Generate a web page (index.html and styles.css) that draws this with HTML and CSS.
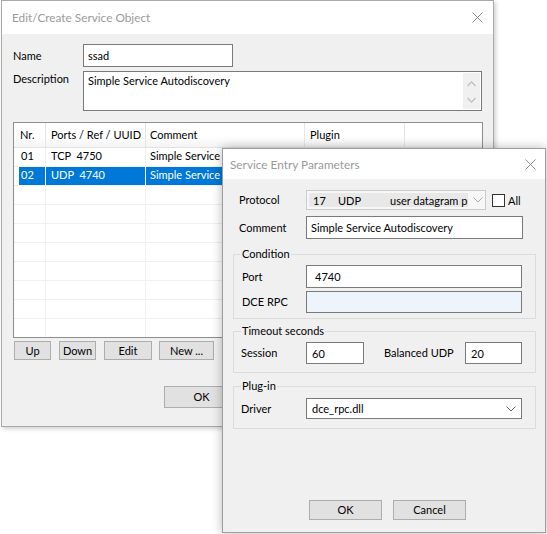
FILE: index.html
```html
<!DOCTYPE html>
<html>
<head>
<meta charset="utf-8">
<title>Service Object</title>
<link rel="stylesheet" href="styles.css">
</head>
<body>
<div class="desk">

  <section class="win win-main">
    <header class="titlebar">
      <span class="title">Edit/Create Service Object</span>
      <svg class="close" width="11" height="11" viewBox="0 0 11 11"><path d="M0.5 0.5 L10.5 10.5 M10.5 0.5 L0.5 10.5" stroke="#8a8a8a" stroke-width="1" fill="none"/></svg>
    </header>
    <div class="main-body">
      <div class="frow">
        <span class="lbl">Name</span>
        <div class="edit name-edit">ssad</div>
      </div>
      <div class="frow frow-top">
        <span class="lbl lbl-top">Description</span>
        <div class="edit desc-edit">
          <span class="desc-text">Simple Service Autodiscovery</span>
          <div class="vscroll">
            <svg width="9" height="6" viewBox="0 0 9 6"><path d="M0.5 5 L4.5 1 L8.5 5" stroke="#c2c2c2" stroke-width="1.3" fill="none"/></svg>
            <svg width="9" height="6" viewBox="0 0 9 6"><path d="M0.5 1 L4.5 5 L8.5 1" stroke="#c2c2c2" stroke-width="1.3" fill="none"/></svg>
          </div>
        </div>
      </div>

      <div class="list">
        <div class="lrow lhead">
          <div class="c c1">Nr.</div>
          <div class="c c2">Ports / Ref / UUID</div>
          <div class="c c3">Comment</div>
          <div class="c c4">Plugin</div>
          <div class="c c5"></div>
        </div>
        <div class="lrow">
          <div class="c c1">01</div>
          <div class="c c2">TCP&nbsp; 4750</div>
          <div class="c c3">Simple Service Autodiscovery</div>
          <div class="c c4"></div>
          <div class="c c5"></div>
        </div>
        <div class="lrow sel">
          <div class="c c1">02</div>
          <div class="c c2">UDP&nbsp; 4740</div>
          <div class="c c3">Simple Service Autodiscovery</div>
          <div class="c c4">dce_rpc.dll</div>
          <div class="c c5"></div>
        </div>
        <div class="lrow"><div class="c c1"></div><div class="c c2"></div><div class="c c3"></div><div class="c c4"></div><div class="c c5"></div></div>
        <div class="lrow"><div class="c c1"></div><div class="c c2"></div><div class="c c3"></div><div class="c c4"></div><div class="c c5"></div></div>
        <div class="lrow"><div class="c c1"></div><div class="c c2"></div><div class="c c3"></div><div class="c c4"></div><div class="c c5"></div></div>
        <div class="lrow"><div class="c c1"></div><div class="c c2"></div><div class="c c3"></div><div class="c c4"></div><div class="c c5"></div></div>
        <div class="lrow"><div class="c c1"></div><div class="c c2"></div><div class="c c3"></div><div class="c c4"></div><div class="c c5"></div></div>
        <div class="lrow"><div class="c c1"></div><div class="c c2"></div><div class="c c3"></div><div class="c c4"></div><div class="c c5"></div></div>
        <div class="lrow"><div class="c c1"></div><div class="c c2"></div><div class="c c3"></div><div class="c c4"></div><div class="c c5"></div></div>
        <div class="lrow"><div class="c c1"></div><div class="c c2"></div><div class="c c3"></div><div class="c c4"></div><div class="c c5"></div></div>
      </div>

      <div class="btnrow">
        <button class="btn b-up">Up</button>
        <button class="btn b-down">Down</button>
        <button class="btn b-edit">Edit</button>
        <button class="btn b-new">New ...</button>
      </div>
      <div class="okrow">
        <button class="btn b-ok1">OK</button>
      </div>
    </div>
  </section>

  <section class="win win-entry">
    <header class="titlebar titlebar-entry">
      <span class="title">Service Entry Parameters</span>
      <svg class="close" width="11" height="11" viewBox="0 0 11 11"><path d="M0.5 0.5 L10.5 10.5 M10.5 0.5 L0.5 10.5" stroke="#8a8a8a" stroke-width="1" fill="none"/></svg>
    </header>
    <div class="entry-body">
      <div class="erow erow-proto">
        <span class="lbl">Protocol</span>
        <div class="combo combo-ro">
          <div class="combo-val"><span class="p-num">17</span><span class="p-name">UDP</span><span class="p-desc">user datagram protocol</span></div>
          <svg class="chev" width="10" height="6" viewBox="0 0 10 6"><path d="M0.5 0.5 L5 5 L9.5 0.5" stroke="#a8a8a8" stroke-width="1" fill="none"/></svg>
        </div>
        <span class="chk"></span>
        <span class="chk-lbl">All</span>
      </div>
      <div class="erow erow-comment">
        <span class="lbl">Comment</span>
        <div class="edit e-comment">Simple Service Autodiscovery</div>
      </div>

      <fieldset class="group g-cond">
        <legend>Condition</legend>
        <div class="grow">
          <span class="lbl">Port</span>
          <div class="edit e-port">4740</div>
        </div>
        <div class="grow grow-2">
          <span class="lbl">DCE RPC</span>
          <div class="edit e-dce"></div>
        </div>
      </fieldset>

      <fieldset class="group g-time">
        <legend>Timeout seconds</legend>
        <div class="grow grow-time">
          <span class="lbl lbl-sess">Session</span>
          <div class="edit e-num">60</div>
          <span class="lbl lbl-bal">Balanced UDP</span>
          <div class="edit e-num e-bal">20</div>
        </div>
      </fieldset>

      <fieldset class="group g-plug">
        <legend>Plug-in</legend>
        <div class="grow grow-plug">
          <span class="lbl lbl-sess">Driver</span>
          <div class="combo combo-drv">
            <span class="drv-val">dce_rpc.dll</span>
            <svg class="chev" width="10" height="6" viewBox="0 0 10 6"><path d="M0.5 0.5 L5 5 L9.5 0.5" stroke="#606060" stroke-width="1" fill="none"/></svg>
          </div>
        </div>
      </fieldset>

      <div class="entry-btns">
        <button class="btn b-ok2">OK</button>
        <button class="btn b-cancel">Cancel</button>
      </div>
    </div>
  </section>

</div>
</body>
</html>
```

FILE: styles.css
```css
* { box-sizing: border-box; }

html, body {
  margin: 0;
  padding: 0;
  background: #ffffff;
}

body {
  font-family: Lato, "Liberation Sans", Arial, sans-serif;
  font-size: 11px;
  color: #000;
}

.desk {
  position: relative;
  width: 547px;
  height: 534px;
  overflow: hidden;
}

.win {
  position: absolute;
  background: #f0f0f0;
  display: flex;
  flex-direction: column;
}

.win-main {
  left: 1px;
  top: 0;
  width: 493px;
  height: 427px;
  border: 1px solid #a9a9a9;
  box-shadow: 2px 2px 4px rgba(0, 0, 0, 0.18);
}

.win-entry {
  left: 222px;
  top: 148px;
  width: 324px;
  height: 385px;
  border: 1px solid #9d9d9d;
  box-shadow: 0 0 10px rgba(0, 0, 0, 0.28);
}

.titlebar {
  height: 33px;
  flex: none;
  background: #fff;
  display: flex;
  align-items: center;
  justify-content: space-between;
  padding: 0 10px 0 10px;
}

.titlebar-entry {
  height: 30px;
  padding: 0 9px 0 7px;
}

.title {
  color: #9a9a9a;
  font-size: 11.8px;
}

/* ---------- main dialog ---------- */

.main-body {
  padding: 10px 11px 0 11px;
}

.frow {
  display: flex;
  align-items: center;
}

.frow-top {
  align-items: flex-start;
  margin-top: 4px;
}

.lbl {
  width: 70px;
  flex: none;
  line-height: 16px;
}

.lbl-top {
  margin-top: 0;
}

.edit {
  border: 1px solid #7a7a7a;
  background: #fff;
  display: flex;
  align-items: center;
  padding-left: 4px;
  white-space: nowrap;
  overflow: hidden;
}

.name-edit {
  width: 150px;
  height: 23px;
}

.desc-edit {
  width: 400px;
  height: 40px;
  align-items: flex-start;
  justify-content: space-between;
  padding: 1px 1px 1px 4px;
}

.desc-text {
  line-height: 16px;
}

.vscroll {
  width: 17px;
  height: 100%;
  margin-top: 0;
  background: #f0f0f0;
  display: flex;
  flex-direction: column;
  align-items: center;
  justify-content: space-between;
  padding: 8px 0 6px 0;
}

.list {
  margin-top: 11px;
  width: 470px;
  height: 216px;
  border: 1px solid #8e8e8e;
  background: #fff;
  overflow: hidden;
}

.lrow {
  display: flex;
  height: 19px;
  border-bottom: 1px solid #f0f0f0;
}

.lhead {
  height: 25px;
  border-bottom: 1px solid #e2e2e2;
  background: linear-gradient(#ffffff 55%, #f4f4f4);
}

.c {
  height: 100%;
  flex: none;
  display: flex;
  align-items: center;
  white-space: nowrap;
  overflow: hidden;
  border-right: 1px solid #f0f0f0;
  padding-left: 4px;
  padding-bottom: 3px;
}

.lhead .c {
  border-right-color: #e5e5e5;
  padding-bottom: 2px;
}

.c1 { width: 32px; padding-left: 7px; }
.lhead .c1 { padding-left: 6px; }
.c2 { width: 100px; padding-left: 5px; }
.c3 { width: 159px; }
.c4 { width: 100px; padding-left: 5px; }
.c5 { flex: 1; border-right: none; }

.sel .c {
  background: #0078d7;
  color: #fff;
  border-right-color: #fff;
}

.sel .c1 {
  box-shadow: inset 5px 0 0 #fff;
}

.sel .c5 {
  background: #fff;
}

.btnrow {
  display: flex;
  margin-top: 3px;
  margin-left: 1px;
}

.btn {
  font-family: inherit;
  font-size: 11px;
  color: #000;
  background: #e1e1e1;
  border: 1px solid #adadad;
  border-radius: 0;
  padding: 0;
  margin: 0;
  height: 19px;
  line-height: 16px;
}

.b-up { width: 37px; }
.b-down { width: 37px; margin-left: 8px; }
.b-edit { width: 48px; margin-left: 8px; }
.b-new { width: 55px; margin-left: 7px; }

.okrow {
  margin-top: 26px;
  padding-left: 151px;
}

.b-ok1 {
  width: 75px;
  height: 22px;
}

/* ---------- entry dialog ---------- */

.entry-body {
  padding: 10px 0 0 16px;
}

.erow {
  display: flex;
  align-items: center;
}

.erow .lbl {
  width: 67px;
}

.erow-proto {
  margin-top: 1px;
}

.erow-comment {
  margin-top: 6px;
}

.combo {
  display: flex;
  align-items: center;
  white-space: nowrap;
  overflow: hidden;
}

.combo-ro {
  width: 180px;
  height: 20px;
  border: 1px solid #cbcbcb;
  background: #f7f7f7;
  padding: 2px;
}

.combo-val {
  width: 160px;
  height: 100%;
  background: #e8e8e8;
  display: flex;
  align-items: center;
  overflow: hidden;
  padding-left: 4px;
}

.p-num { width: 25px; flex: none; }
.p-name { width: 52px; flex: none; }
.p-desc { flex: none; }

.combo-ro .chev {
  margin-left: 5px;
}

.chk {
  width: 13px;
  height: 13px;
  border: 1px solid #333;
  background: #fff;
  margin-left: 6px;
  flex: none;
}

.chk-lbl {
  margin-left: 3px;
}

.e-comment {
  width: 217px;
  height: 23px;
}

.group {
  margin: 7px 0 0 -6px;
  width: 303px;
  border: 1px solid #dcdcdc;
  padding: 0 7px 5px 7px;
}

.group legend {
  padding: 0 1px;
  line-height: 16px;
  font-size: 11px;
}

.g-time {
  margin-top: 4px;
  padding-bottom: 8px;
}

.g-plug {
  margin-top: 5px;
  padding-bottom: 9px;
}

.grow {
  display: flex;
  align-items: center;
  margin-top: 3px;
}

.grow .lbl {
  width: 65px;
  padding-left: 1px;
}

.grow .lbl-sess {
  padding-left: 0;
}

.e-port {
  width: 216px;
  height: 23px;
  padding-left: 8px;
}

.e-dce {
  width: 216px;
  height: 22px;
  background: #edf4fc;
}

.e-num {
  width: 58px;
  height: 22px;
  padding-left: 5px;
}

.lbl-bal.lbl {
  width: 101px;
  padding-left: 20px;
}

.e-bal {
  width: 57px;
}

.grow-plug {
  margin-top: 4px;
}

.combo-drv {
  width: 216px;
  height: 21px;
  border: 1px solid #7a7a7a;
  background: #fff;
  padding-left: 5px;
  justify-content: space-between;
  padding-right: 5px;
}

.entry-btns {
  display: flex;
  margin-top: 71px;
  padding-left: 70px;
}

.b-ok2, .b-cancel {
  width: 73px;
  height: 20px;
}

.b-cancel {
  margin-left: 11px;
}
```
